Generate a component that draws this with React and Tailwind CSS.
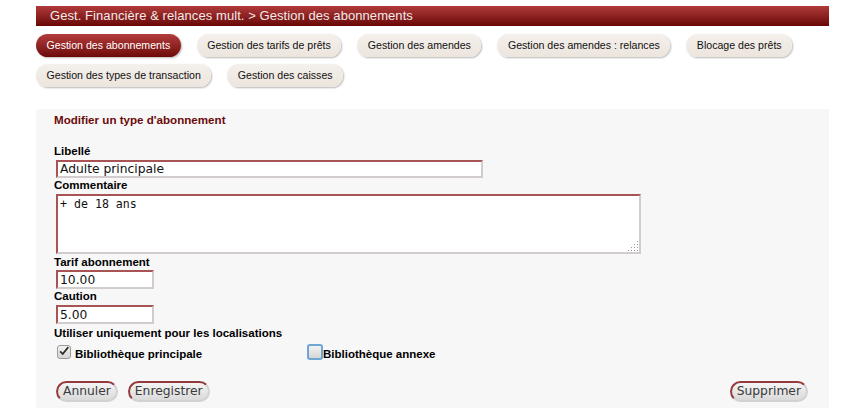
import { useState } from 'react';

const tabs = [
  'Gestion des abonnements',
  'Gestion des tarifs de prêts',
  'Gestion des amendes',
  'Gestion des amendes : relances',
  'Blocage des prêts',
  'Gestion des types de transaction',
  'Gestion des caisses',
];

const fieldBorder =
  'border-2 border-t-[#a85454] border-l-[#a85454] border-r-[#d2cccc] border-b-[#d2cccc] bg-white';

const inputText = "font-['DejaVu_Sans',sans-serif] text-[12.3px] text-[#111]";

function Label({ children, className = '' }) {
  return (
    <div className={`text-[11.5px] font-bold leading-[14px] text-black ${className}`}>
      {children}
    </div>
  );
}

function Checkbox({ checked, focused }) {
  return (
    <span
      className={`flex h-[14px] w-[14px] items-center justify-center rounded-[3px] bg-gradient-to-b from-[#f2f2f2] to-[#d6d6d6] ${
        focused
          ? 'border-2 border-[#6fa6d6] h-[16px] w-[16px]'
          : 'border border-[#9a9a9a]'
      }`}
    >
      {checked && (
        <svg width="14" height="14" viewBox="0 0 14 14" className="-mt-[3px]">
          <path d="M2.5 7.5 L5.5 10.5 L12 2.5" fill="none" stroke="#2a2a2a" strokeWidth="2" />
        </svg>
      )}
    </span>
  );
}

function PillButton({ children }) {
  return (
    <button
      type="button"
      className="h-[21px] rounded-full border-2 border-t-[#953a3a] border-l-[#953a3a] border-r-[#d2d2d2] border-b-[#d2d2d2] bg-gradient-to-b from-[#f4f4f4] to-[#dadada] px-[5px] font-['DejaVu_Sans',sans-serif] text-[12.3px] leading-[17px] text-[#3a3a3a]"
    >
      {children}
    </button>
  );
}

export default function App() {
  const [libelle, setLibelle] = useState('Adulte principale');
  const [commentaire, setCommentaire] = useState('+ de 18 ans');
  const [tarif, setTarif] = useState('10.00');
  const [caution, setCaution] = useState('5.00');

  return (
    <div className="min-h-screen bg-white font-['Liberation_Sans',Arial,sans-serif]">
      <div className="ml-[36px] w-[793px] pt-[6px]">
        {/* Header */}
        <div className="h-[20px] bg-gradient-to-b from-[#b03a3a] to-[#690606] pl-[14px] text-[13px] leading-[20px] tracking-[0.07px] text-[#f2eaea]">
          Gest. Financière &amp; relances mult. &gt; Gestion des abonnements
        </div>

        {/* Tabs */}
        <div className="mt-[8px] flex flex-wrap gap-x-[16px] gap-y-[7px]">
          {tabs.map((t, i) => (
            <div
              key={t}
              className={`h-[23px] rounded-full px-[10.5px] text-[10.6px] leading-[23px] shadow-[1px_1px_2px_rgba(0,0,0,0.28)] ${
                i === 0
                  ? 'bg-gradient-to-b from-[#b33c3c] to-[#6e0909] text-white'
                  : 'bg-gradient-to-b from-[#f4f0eb] to-[#ece5de] text-[#111]'
              }`}
            >
              {t}
            </div>
          ))}
        </div>

        {/* Panel */}
        <div className="mt-[22px] bg-[#f7f7f7] pb-[6px] pl-[18px] pr-[21px] pt-[4px]">
          <div className="text-[11.6px] font-bold leading-[14px] text-[#6b0a0a]">
            Modifier un type d'abonnement
          </div>

          <Label className="mt-[17px]">Libellé</Label>
          <input
            value={libelle}
            onChange={(e) => setLibelle(e.target.value)}
            className={`ml-[2px] mt-[2px] block h-[18px] w-[427px] px-[2px] leading-[14px] outline-none ${fieldBorder} ${inputText}`}
          />

          <Label>Commentaire</Label>
          <div className="relative ml-[2px] mt-[2px] h-[60px] w-[585px]">
            <textarea
              value={commentaire}
              onChange={(e) => setCommentaire(e.target.value)}
              className={`block h-full w-full resize-none px-[2px] py-[2px] font-['DejaVu_Sans_Mono',monospace] text-[11.6px] leading-[13px] text-[#111] outline-none ${fieldBorder}`}
            />
            <svg width="12" height="12" viewBox="0 0 12 12" className="absolute bottom-[2px] right-[2px]">
              {[
                [10, 1], [10, 4], [7, 4], [10, 7], [7, 7], [4, 7],
                [10, 10], [7, 10], [4, 10], [1, 10],
              ].map(([x, y]) => (
                <rect key={`${x}-${y}`} x={x} y={y} width="1" height="1" fill="#9a9a9a" />
              ))}
            </svg>
          </div>

          <Label className="mt-[1px]">Tarif abonnement</Label>
          <input
            value={tarif}
            onChange={(e) => setTarif(e.target.value)}
            className={`ml-[2px] mt-[1px] block h-[19px] w-[98px] px-[2px] leading-[15px] outline-none ${fieldBorder} ${inputText}`}
          />

          <Label>Caution</Label>
          <input
            value={caution}
            onChange={(e) => setCaution(e.target.value)}
            className={`ml-[2px] mt-[2px] block h-[19px] w-[98px] px-[2px] leading-[15px] outline-none ${fieldBorder} ${inputText}`}
          />

          <Label className="mt-[2px]">Utiliser uniquement pour les localisations</Label>
          <div className="ml-[3px] mt-[3px] flex h-[18px] items-center">
            <div className="flex w-[250px] items-center">
              <Checkbox checked />
              <span className="mt-[3px] pl-[4px] text-[11.5px] font-bold leading-[14px] text-black">
                Bibliothèque principale
              </span>
            </div>
            <div className="flex items-center">
              <Checkbox focused />
              <span className="mt-[3px] text-[11.5px] font-bold leading-[14px] text-black">
                Bibliothèque annexe
              </span>
            </div>
          </div>

          <div className="ml-[2px] mt-[20px] flex items-center justify-between">
            <div className="flex gap-[10px]">
              <PillButton>Annuler</PillButton>
              <PillButton>Enregistrer</PillButton>
            </div>
            <PillButton>Supprimer</PillButton>
          </div>
        </div>
      </div>
    </div>
  );
}
